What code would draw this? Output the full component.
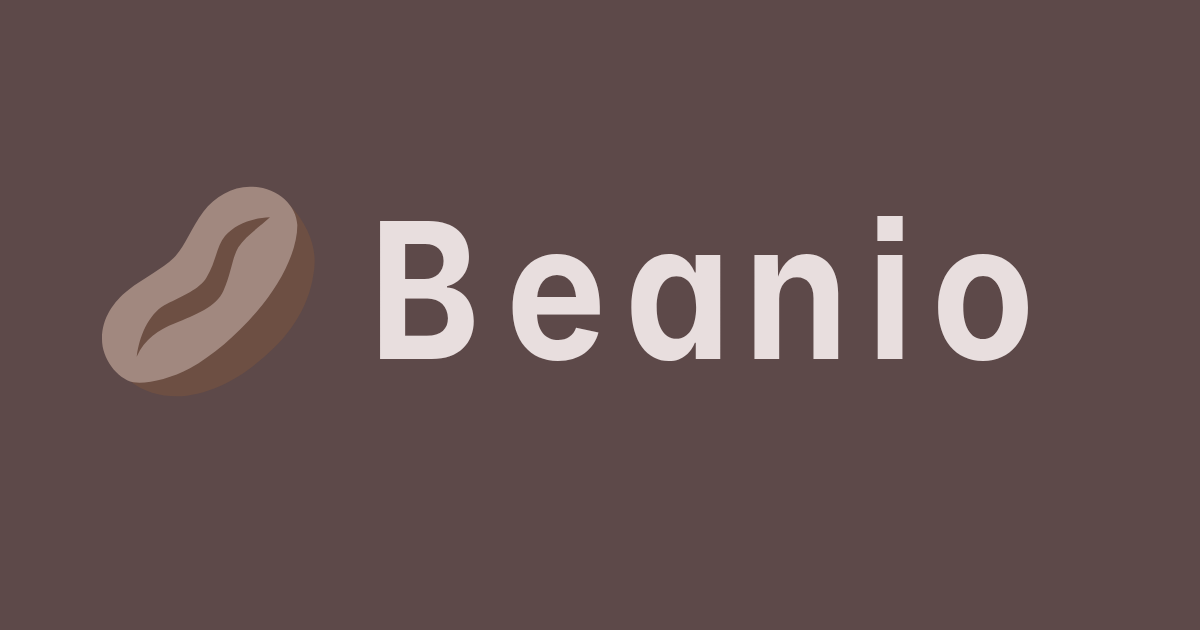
<div class="banner">
  <div class="logo">
    <svg class="bean" viewBox="0 0 720 690" width="240" height="230" aria-hidden="true">
      <path class="shade" d="M600 90 C662 160 684 230 670 300 C655 400 595 490 505 560 C435 620 345 662 260 664 C210 664 160 650 120 618 Z" />
      <path class="face" d="M480 35 C560 35 620 90 622 150 C622 230 570 330 500 410 C440 480 370 540 300 580 C240 612 170 628 130 622 C80 610 35 550 36 490 C36 430 70 380 115 345 C160 310 220 280 250 250 C285 215 300 165 340 110 C375 65 425 35 480 35 Z" />
      <path class="shade" d="M540 127 C490 128 435 148 405 183 C380 213 378 260 350 307 C330 342 275 365 230 387 C185 408 150 470 140 545 C165 492 205 465 255 445 C315 420 380 395 400 348 C425 292 425 252 445 217 C468 182 510 155 540 127 Z" />
    </svg>
    <span class="name"><span class="wide">B</span>e<span class="tight">a</span>nio</span>
  </div>
</div>

<style>
  :global(body) {
    margin: 0;
    background: #5d4949;
  }

  .banner {
    height: 630px;
    overflow: hidden;
    padding: 175px 0 0 90px;
    box-sizing: border-box;
  }

  .logo {
    display: flex;
    align-items: flex-start;
    gap: 39px;
  }

  .bean {
    display: block;
    flex: none;
  }

  .face {
    fill: #a1887f;
  }

  .shade {
    fill: #6d4f43;
  }

  .name {
    font-family: Inter, "Noto Sans", sans-serif;
    font-feature-settings: "cv11", "ss07";
    font-size: 190px;
    font-weight: 700;
    line-height: 230px;
    letter-spacing: 21px;
    color: #e8dede;
    transform: scaleX(0.885);
    transform-origin: left center;
  }

  .wide {
    letter-spacing: 29px;
  }

  .tight {
    letter-spacing: 15px;
  }
</style>
